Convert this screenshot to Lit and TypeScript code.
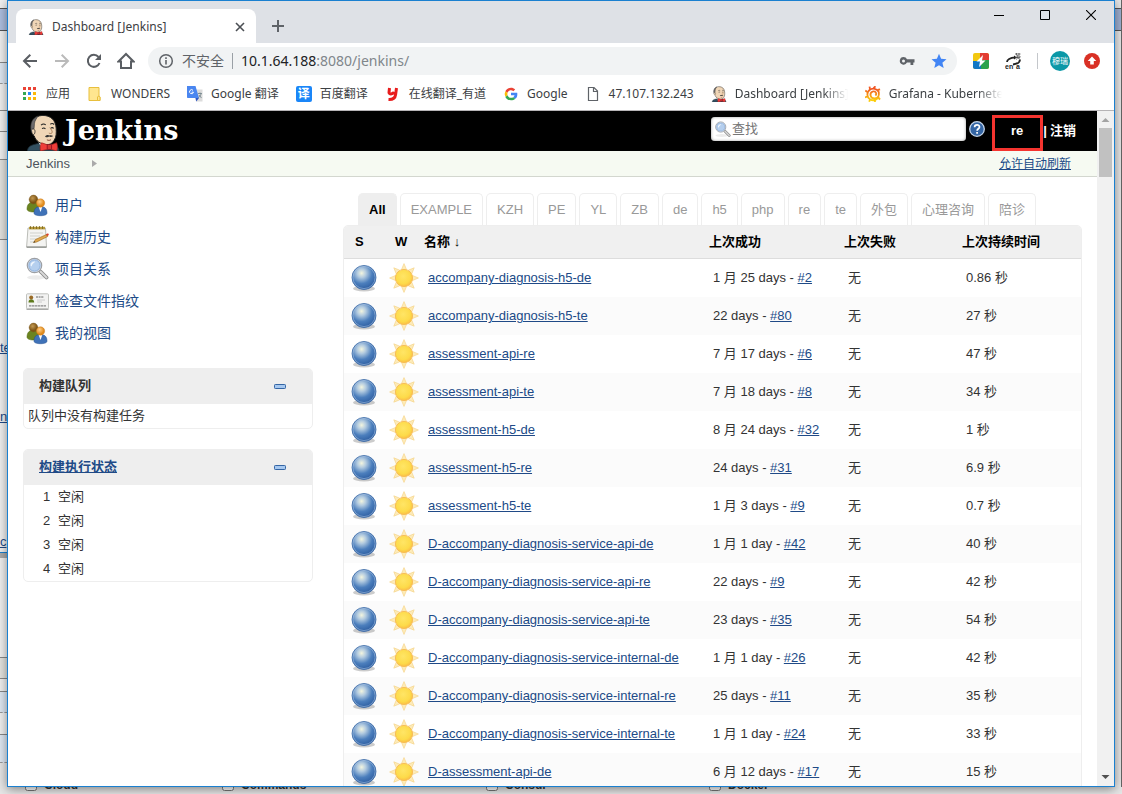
import { LitElement, html, css, svg } from "lit";
import { customElement, state } from "lit/decorators.js";
import { classMap } from "lit/directives/class-map.js";

const butler = (cls: string) => html`<svg class=${cls} viewBox="0 0 34 38" aria-hidden="true">
  <path d="M1 38c0-3 2-5.500 6-6.500l6-1.500h10l6 2c3 1 4.500 3 4.500 6z" fill="#335061" stroke="#1b2a33" stroke-width=".8"/>
  <path d="M12 28l3 6 5 1 4-4-1-4z" fill="#fff"/>
  <path d="M5.500 16C4 8 8 2 16 1.500c9-.4 14 5 14.500 13 .3 5 .3 9-2 12.500-2 3.500-5 5-8.500 4.500-6-.8-10.500-4-12-9-1.800-.8-2.800-4-2.500-6.500z" fill="#f0d6b7" stroke="#222" stroke-width="1"/>
  <path d="M5.200 19C3 10 6 4 12 2c-2 3-3.500 5-3.800 8-.2 2 0 3-.4 5z" fill="#6d6b6d" stroke="#333" stroke-width=".6"/>
  <path d="M5.500 16c1.500-1.500 3.500-.2 3.300 2.200-.1 1.800-.8 3.200-2 3" fill="#f0d6b7" stroke="#222" stroke-width=".8"/>
  <path d="M15 11.500c1.500-1.400 3.500-1.400 4.800-.4M24.500 10.500c1.200-.9 2.800-.8 4 .3M16 15c1.200-.8 2.500-.8 3.500.2M25 14.500c1-.7 2-.6 3 .2" fill="none" stroke="#222" stroke-width="1.100"/>
  <path d="M24 14c1.500 2 3 4 2.300 5.300-.6 1-2.300.8-3.300.3" fill="none" stroke="#a67b55" stroke-width="1"/>
  <path d="M19 23c2-1.600 3.500-1.700 4.500-.8 1.300-.8 2.600-.5 4 .5-1.600 1.100-3 1.200-4.200.5-1.200.9-2.800.9-4.300-.2z" fill="#333"/>
  <path d="M21 26.500c1.500.8 3 .7 4.200-.1" fill="none" stroke="#8a4b3a" stroke-width="1"/>
  <path d="M15.500 29.500l6.500 2.300v4.400l-7.500 1.800c-.8-2.500-.6-6 1-8.500zM31 29.500l-6 2.300v4.400l6 1.800c1.200-2.500 1-6 0-8.500z" fill="#ef3d3a" stroke="#a3201c" stroke-width=".7"/>
  <rect x="21.300" y="31.300" width="4.500" height="5.200" rx="1.200" fill="#d33833" stroke="#81001e" stroke-width=".7"/>
</svg>`;

const people = html`<svg class="i24" viewBox="0 0 24 24" aria-hidden="true">
  <defs>
    <radialGradient id="hairA" cx=".4" cy=".35"><stop offset="0" stop-color="#c49a52"/><stop offset="1" stop-color="#7d5415"/></radialGradient>
    <radialGradient id="hairB" cx=".4" cy=".35"><stop offset="0" stop-color="#ffd18a"/><stop offset="1" stop-color="#e08a1c"/></radialGradient>
  </defs>
  <path d="M2 16c0-4.500 2.500-7 6.500-7s6 2.500 6 7c0 2-3 3-6.300 3S2 18 2 16z" fill="#6b8420" stroke="#4f660f" stroke-width=".5"/>
  <circle cx="8.500" cy="6.500" r="4.400" fill="url(#hairA)" stroke="#7a5518" stroke-width=".4"/>
  <path d="M9 20c0-4.500 2.500-6.500 6.500-6.500S22 15.500 22 20c0 2-3 2.700-6.500 2.700S9 22 9 20z" fill="#3f72b8" stroke="#24508f" stroke-width=".5"/>
  <path d="M13.700 14l1.800 5 1.800-5z" fill="#fff"/>
  <circle cx="15.500" cy="10" r="4.200" fill="url(#hairB)" stroke="#c47410" stroke-width=".4"/>
</svg>`;

const notepad = html`<svg class="i24" viewBox="0 0 24 24" aria-hidden="true">
  <path d="M3 3h17.500l1 19H1.600z" fill="#f4f4f2" stroke="#b3b5b0" stroke-width=".9"/>
  <path d="M1.600 21.500h20v1.300h-20z" fill="#8d8f8a"/>
  <path d="M4 1.800h16v2.600H4z" fill="#b79a3b"/>
  <path d="M5.500 1v3M8.500 1v3M11.500 1v3M14.500 1v3M17.500 1v3" stroke="#6f5c18" stroke-width=".7"/>
  <path d="M5 8h13M5 11h10M5 14h7M5 17h4" stroke="#cfd1cc" stroke-width="1"/>
  <path d="M8.500 17.500l2-3 11-5 1.200 2-11 5.500z" fill="#e0a850" stroke="#9a6512" stroke-width=".6"/>
  <path d="M21 9.300l1.400-.7c1-.3 1.800 1 1.100 1.700l-1.400.9z" fill="#d9402c"/>
  <path d="M8.500 17.500l1-1.500.8 1.200z" fill="#333"/>
</svg>`;

const lens = (cls: string) => html`<svg class=${cls} viewBox="0 0 24 24" aria-hidden="true">
  <ellipse cx="11" cy="20.500" rx="9" ry="2.200" fill="#ececec"/>
  <path d="M15.500 14.500l6 6" stroke="#8a8a8a" stroke-width="3.800" stroke-linecap="round"/>
  <path d="M15.500 14.500l6 6" stroke="#d8d8d8" stroke-width="2" stroke-linecap="round"/>
  <circle cx="9.500" cy="8.500" r="7.200" fill="#e4ecf5" stroke="#9c9fa4" stroke-width="1.200"/>
  <circle cx="9.500" cy="8.500" r="5.700" fill="#b5cfee" stroke="#7ea3d4" stroke-width=".8"/>
  <path d="M5.500 8.500c0-2.600 2-4.200 4.500-4 .8.600-2.700 1.600-3.300 5z" fill="#eef5fd"/>
</svg>`;

const card = html`<svg class="i24" viewBox="0 0 24 24" aria-hidden="true">
  <rect x="1.500" y="4.800" width="22" height="15" rx="1" fill="#f3f3f2" stroke="#c0c2be"/>
  <path d="M1.500 20.300h22" stroke="#999" stroke-width="1"/>
  <path d="M3.500 13.500c0-2.400 1.200-3.200 2.700-3.200s3 .8 3 3.200z" fill="#5d7a1c"/>
  <circle cx="6.200" cy="8.600" r="2" fill="#9a6a25"/>
  <path d="M11 8h8" stroke="#666" stroke-width="1" stroke-dasharray="2 .6"/>
  <path d="M12 11h8M12 13h5" stroke="#ccc"/>
  <path d="M4 16.800h17" stroke="#888" stroke-width="1.200" stroke-dasharray="2.500 .5"/>
</svg>`;

const ball = html`<svg class="i32" viewBox="0 0 32 32" role="img" aria-label="Success">
  <defs>
    <radialGradient id="orb" cx=".4" cy=".32" r=".72">
      <stop offset="0" stop-color="#f3f5df"/><stop offset=".25" stop-color="#b3cbe0"/>
      <stop offset=".6" stop-color="#4c7fbd"/><stop offset="1" stop-color="#2a5a9e"/>
    </radialGradient>
  </defs>
  <ellipse cx="16" cy="26.500" rx="11" ry="3" fill="#000" opacity=".2"/>
  <circle cx="16" cy="15.500" r="12" fill="url(#orb)" stroke="#3a68a4" stroke-width=".8"/>
  <circle cx="16" cy="15.500" r="11.100" fill="none" stroke="#a9c4e4" stroke-opacity=".6" stroke-width=".9"/>
</svg>`;

const rays = [0, 45, 90, 135, 180, 225, 270, 315];
const sun = html`<svg class="i32" viewBox="0 0 32 32" role="img" aria-label="100%">
  <defs>
    <radialGradient id="sol" cx=".45" cy=".4" r=".6">
      <stop offset="0" stop-color="#ffe566"/><stop offset=".7" stop-color="#fddb4a"/><stop offset="1" stop-color="#fbbf45"/>
    </radialGradient>
  </defs>
  ${rays.map((r) => svg`<path d="M13.500 7.500L16 1.600l2.500 5.900z" transform="rotate(${r} 16 16)" fill="#fdebb8" stroke="#f6d58c" stroke-width=".7"/>`)}
  <circle cx="16" cy="16" r="8.600" fill="url(#sol)" stroke="#f7bb55" stroke-width=".9"/>
</svg>`;

const bookmarkIcons: Record<string, unknown> = {
  apps: html`<svg class="i16" viewBox="0 0 16 16" aria-hidden="true"><path d="M1 1h3v3H1zM6 1h3v3H6zM11 1h3v3h-3z" fill="#ea4335"/><path d="M1 6h3v3H1zM1 11h3v3H1z" fill="#34a853"/><path d="M6 6h3v3H6z" fill="#2a8af6"/><path d="M11 6h3v3h-3zM6 11h3v3H6zM11 11h3v3h-3z" fill="#fbb90a"/></svg>`,
  folder: html`<svg class="i16" viewBox="0 0 16 16" aria-hidden="true"><path d="M2 1.500h10v9.500h1v3.500H2z" fill="#ffe68f" stroke="#e8bf3c"/><path d="M10.500 14.500V11c0-1 2.500-1 2.500 0v3.500z" fill="#ffe68f" stroke="#e8bf3c"/></svg>`,
  translate: html`<svg class="i16" viewBox="0 0 16 16" aria-hidden="true"><path d="M6 3.500h9.500V15.500H9z" fill="#dcdcdc"/><path d="M0 0h8.500l3.500 12H1C.3 12 0 11.600 0 11z" fill="#4a86f0"/><path d="M8.500 12H12l-2.700 3.600z" fill="#2f56c4"/><path d="M6 4.300a2 2 0 1 0 .5 1.900H4.600" fill="none" stroke="#fff" stroke-width="1"/><path d="M11 7.500h4M13 6.500v1M14 8c-.5 2-1.500 3-2.500 3.700M12 9l2.500 3" fill="none" stroke="#6b7d85" stroke-width=".8"/></svg>`,
  baidu: html`<span class="baidu" aria-hidden="true">译</span>`,
  youdao: html`<svg class="i16" viewBox="0 0 16 16" aria-hidden="true"><path d="M4.500 2l-.5 4.500c0 1.900 3.500 1.900 5.200-.3M11.500 2l-.9 6.500c-.4 3.400-2.600 5.200-7.100 5" fill="none" stroke="#e81c1c" stroke-width="3"/></svg>`,
  google: html`<svg class="i16" viewBox="0 0 48 48" aria-hidden="true"><path fill="#EA4335" d="M24 13c3 0 5.200 1.200 6.800 2.700l5.700-5.500C33 7 28.800 5 24 5 16.600 5 10.200 9.200 7 15.400l6.600 5.100C15.200 16 19.200 13 24 13z"/><path fill="#4285F4" d="M43 24.400c0-1.500-.1-2.600-.4-3.900H24v7.200h10.700c-.5 2.500-2 4.400-4 5.700l6.400 5C41 35 43 30.300 43 24.400z"/><path fill="#FBBC05" d="M13.600 27.600a11.500 11.500 0 0 1 0-7.100L7 15.400a19 19 0 0 0 0 17.200z"/><path fill="#34A853" d="M24 43c5.100 0 9.500-1.700 12.900-4.700l-6.300-4.900C29 34.500 26.800 35.200 24 35.200c-4.800 0-8.900-3.200-10.400-7.600L7 32.700C10.200 38.800 16.600 43 24 43z"/></svg>`,
  page: html`<svg class="i16" viewBox="0 0 16 16" aria-hidden="true"><path d="M3.500 1.500h5.500l3.500 3.500v9.500h-9zM8.500 1.500V5.500h4" fill="#fff" stroke="#5f6368" stroke-width="1.200"/></svg>`,
  jenkins: butler("i16"),
  grafana: html`<svg class="i16" viewBox="0 0 16 16" aria-hidden="true"><defs><linearGradient id="graf" x1="0" y1="0" x2="0" y2="1"><stop offset="0" stop-color="#f04e23"/><stop offset="1" stop-color="#fcd20a"/></linearGradient></defs><path d="M14 10.500A6 5.800 0 1 1 13.800 6M13.800 6c.6 4-1 6.500-4.500 6.500-4 0-5.500-5.500-1.500-7 3-.8 4.500 2.500 2.500 4" fill="none" stroke="url(#graf)" stroke-width="1.800"/><path d="M5 3L4.500.6M8.500 2.200L10.500.3M12.500 4l2.600-.6M2.500 6L.3 4.600M2.300 10.500L0 11.500M5 13.500l-.8 2.200M9.500 14l.7 2M13.500 12l1.600 1.500" stroke="url(#graf)" stroke-width="1.800"/></svg>`,
};

const bookmarks = [
  { icon: "apps", label: "应用" },
  { icon: "folder", label: "WONDERS" },
  { icon: "translate", label: "Google 翻译" },
  { icon: "baidu", label: "百度翻译" },
  { icon: "youdao", label: "在线翻译_有道" },
  { icon: "google", label: "Google" },
  { icon: "page", label: "47.107.132.243" },
  { icon: "jenkins", label: "Dashboard [Jenkins]", faded: true },
  { icon: "grafana", label: "Grafana - Kubernetes", faded: true },
];

const tasks = [
  { icon: people, label: "用户" },
  { icon: notepad, label: "构建历史" },
  { icon: lens("i24"), label: "项目关系" },
  { icon: card, label: "检查文件指纹" },
  { icon: people, label: "我的视图" },
];

const views = ["All", "EXAMPLE", "KZH", "PE", "YL", "ZB", "de", "h5", "php", "re", "te", "外包", "心理咨询", "陪诊"];

const jobs = [
  ["accompany-diagnosis-h5-de", "1 月 25 days", "#2", "0.86 秒"],
  ["accompany-diagnosis-h5-te", "22 days", "#80", "27 秒"],
  ["assessment-api-re", "7 月 17 days", "#6", "47 秒"],
  ["assessment-api-te", "7 月 18 days", "#8", "34 秒"],
  ["assessment-h5-de", "8 月 24 days", "#32", "1 秒"],
  ["assessment-h5-re", "24 days", "#31", "6.9 秒"],
  ["assessment-h5-te", "1 月 3 days", "#9", "0.7 秒"],
  ["D-accompany-diagnosis-service-api-de", "1 月 1 day", "#42", "40 秒"],
  ["D-accompany-diagnosis-service-api-re", "22 days", "#9", "42 秒"],
  ["D-accompany-diagnosis-service-api-te", "23 days", "#35", "54 秒"],
  ["D-accompany-diagnosis-service-internal-de", "1 月 1 day", "#26", "42 秒"],
  ["D-accompany-diagnosis-service-internal-re", "25 days", "#11", "35 秒"],
  ["D-accompany-diagnosis-service-internal-te", "1 月 1 day", "#24", "33 秒"],
  ["D-assessment-api-de", "6 月 12 days", "#17", "15 秒"],
];

/* Slices of the window behind, top to bottom: height, look, visible letters. */
const slices: [number, string, string?][] = [
  [8, "plain"], [23, "title"], [32, "plain solid"], [21, "blue dashed"], [27, "plain solid"],
  [21, "plain solid"], [28, "plain solid"], [80, "stone solid"], [98, "plain"], [20, "plain", "te"],
  [49, "plain"], [20, "plain", "nc"], [105, "plain"], [18, "plain", "c"], [3, "edge"],
  [5, "shade"], [100, "plain solid"], [21, "stone solid"], [13, "plain solid"], [21, "blue dashed"],
  [22, "plain solid"], [28, "blue dashed"],
];

@customElement("app-root")
export class AppRoot extends LitElement {
  @state() private view = "All";

  static styles = css`
    :host {
      display: grid;
      grid-template-columns: 7px minmax(0, 1fr) 7px;
      grid-template-rows: minmax(0, 1fr) 7px;
      height: 100vh;
      overflow: hidden;
      background: #e6e6e6;
      color: #333;
      font: 13px/20px "Liberation Sans", Arial, "Noto Sans CJK SC", sans-serif;
    }
    * { box-sizing: border-box; }
    button { padding: 0; border: 0; background: none; font: inherit; color: inherit; }
    svg { display: block; flex: none; }
    a { color: #204a87; }
    .i16 { width: 16px; height: 16px; }
    .i24 { width: 24px; height: 24px; }
    .i32 { width: 32px; height: 32px; }

    .behind-left { overflow: hidden; }
    .slice { overflow: hidden; color: #204a87; text-decoration: underline; }
    .plain { background: #f1f1f1; }
    .title { background: #aebfe0; border: solid #555; border-width: 1px 0; }
    .blue { background: #dfe8f3; }
    .stone { background: #e4e4e0; }
    .solid { border-bottom: 1px solid #888; }
    .dashed { border-bottom: 1px dashed #999; }
    .edge { background: #eee; border-bottom: 1px solid #1a80d0; }
    .shade { background: #aaa; }
    .behind-right { background: #e8e8e8; border-right: 1px solid #666; padding-top: 8px; }
    .behind-title { height: 23px; background: #9fb0d2; border: solid #555; border-width: 1px 0; }
    .behind-bottom {
      grid-column: 1 / -1;
      display: grid;
      grid-template-columns: 197fr 264fr 223fr 413fr;
      grid-template-rows: minmax(0, 1fr);
      align-items: end;
      padding: 0 0 3px 25px;
      overflow: hidden;
      font: bold 12px/12px "Liberation Sans", Arial, sans-serif;
    }
    .behind-bottom label { display: flex; align-items: flex-end; gap: 7px; height: 12px; }
    .behind-bottom input { width: 12px; height: 12px; margin: 0; }

    .window {
      position: relative;
      display: flex;
      flex-direction: column;
      border: 1px solid #1a80d0;
      background: #fff;
      box-shadow: 0 2px 10px rgba(0, 0, 0, 0.45);
      min-height: 0;
    }

    .tabstrip { display: flex; align-items: flex-end; height: 42px; flex: none; background: #dee1e6; padding-left: 8px; }
    .tab {
      display: flex; align-items: center; gap: 8px;
      width: 240px; height: 34px; padding: 1px 11px 0 12px;
      background: #fff; border-radius: 8px 8px 0 0; color: #3c4043;
      font: 12px/18px "Noto Sans", "Noto Sans CJK SC", sans-serif;
    }
    .tab-title { flex: 1; }
    .newtab { width: 44px; height: 34px; display: grid; place-items: center; }
    .sysbuttons { margin-left: auto; align-self: flex-start; display: flex; }
    .sysbuttons button { width: 46px; height: 28px; display: grid; place-items: center; }

    .toolbar { display: flex; align-items: center; height: 36px; flex: none; padding: 0 6px; }
    .nav { width: 32px; height: 32px; display: grid; place-items: center; }
    .omnibox {
      flex: 1; display: flex; align-items: center; height: 28px; margin-left: 6px; padding: 0 10px;
      border-radius: 14px; background: #f1f3f4; color: #5f6368;
      font: 14px/20px "Noto Sans", "Noto Sans CJK SC", sans-serif;
    }
    .secure { margin-left: 8px; padding-right: 8px; }
    .rule { width: 1px; height: 16px; background: #9aa0a6; }
    .url { margin-left: 8px; flex: 1; color: #80868b; }
    .url b { font-weight: normal; color: #202124; }
    .pair { display: flex; gap: 16px; }
    .extensions { display: flex; align-items: center; gap: 16px; padding: 0 8px 0 16px; }
    .extensions .rule { background: #c4c7cb; }
    .avatar {
      width: 20px; height: 20px; margin: 0 -2px 0 -4px; border-radius: 50%; background: #0b98a7; color: #fff;
      font: 8px/20px "Noto Sans CJK SC", sans-serif; text-align: center; white-space: nowrap;
    }

    .bookmarks {
      display: flex; align-items: center; gap: 17px; height: 31px; flex: none; padding: 0 14px 1px;
      font: 12px/18px "Noto Sans", "Noto Sans CJK SC", sans-serif;
    }
    .bookmark { display: flex; align-items: center; gap: 8px; color: #3c4043; text-decoration: none; white-space: nowrap; }
    .faded { width: 113px; overflow: hidden; mask-image: linear-gradient(to right, #000 78%, transparent); }
    .baidu { width: 16px; height: 16px; border-radius: 2px; background: #1a86f8; color: #fff; line-height: 15px; text-align: center; font-weight: bold; }

    .viewport { display: flex; flex: 1; min-height: 0; border-top: 1px solid #b6b4b6; }
    .page { flex: 1; min-width: 0; overflow: hidden; }
    .scroll { width: 17px; flex: none; display: flex; flex-direction: column; align-items: center; background: #f1f1f1; }
    .scroll svg { width: 17px; height: 17px; }
    .thumb { width: 13px; height: 49px; background: #c1c1c1; margin-bottom: auto; }

    .masthead { display: flex; align-items: center; height: 40px; padding: 0 21px 4px 18px; background: #000; color: #fff; }
    .logo { display: flex; align-items: flex-end; height: 36px; color: #fff; text-decoration: none; font: bold 27px/36px "DejaVu Serif", Georgia, serif; gap: 5px; }
    .mascot { width: 34px; height: 37px; margin-bottom: -4px; }
    .wordmark { margin-bottom: -2px; }
    .search { display: flex; align-items: center; width: 255px; height: 24px; margin-left: auto; padding-left: 3px; border-radius: 4px; background: #fff; box-shadow: inset 0 0 3px #999; }
    .search input { flex: 1; min-width: 0; margin-left: 1px; padding: 0; border: 0; outline: 0; background: none; font: inherit; }
    .search input::placeholder { color: #757575; }
    .i18 { width: 17px; height: 17px; }
    .help { margin-left: 3px; width: 16px; height: 16px; }
    .account { display: flex; margin-left: 26px; padding-top: 4px; font-weight: bold; line-height: 24px; }
    .account a { color: #fff; text-decoration: none; }
    .account .user { position: relative; margin-right: 20px; }
    .user::after { content: ""; position: absolute; inset: -4px -20px -8px -19px; border: 3px solid #f5342f; }
    .account .logout { margin-left: 3px; }

    .crumbs { display: flex; align-items: center; height: 26px; padding: 0 26px 0 18px; background: #f6faf2; border-bottom: 1px solid #d3d7cf; }
    .crumbs .home { color: #4d545d; text-decoration: none; }
    .crumbs svg { margin-left: 22px; width: 5px; height: 7px; }
    .refresh { margin-left: auto; font-size: 12px; }

    .body { display: flex; }
    .side { width: 335px; flex: none; padding: 12px 30px 0 15px; }
    .task { display: flex; align-items: center; gap: 6px; height: 32px; padding-left: 2px; font-size: 14px; text-decoration: none; }
    .panels { display: flex; flex-direction: column; gap: 20px; margin-top: 19px; }
    .panel { border: 1px solid #eee; border-radius: 5px; overflow: hidden; }
    .panel-head { display: flex; align-items: center; justify-content: space-between; height: 35px; padding: 0 26px 1px 15px; background: #eee; }
    .panel-head h2 { margin: 0; font-size: 13px; line-height: 20px; }
    .panel p { margin: 0; padding-left: 4px; line-height: 24px; }
    .panel ol { margin: 0; padding: 0 0 0 19px; list-style: none; line-height: 24px; }
    .num { display: inline-block; width: 15px; }

    .main { flex: 1; min-width: 0; padding: 16px 15px 0 0; }
    .views { display: flex; gap: 3px; padding-left: 15px; }
    .view { height: 32px; padding: 0 10px; border: 1px solid #eee; border-bottom: 0; border-radius: 5px 5px 0 0; color: #999; white-space: nowrap; }
    .view.active { background: #eee; color: #000; font-weight: bold; }
    .jobs-box { border: 1px solid #eee; border-radius: 5px 5px 0 0; overflow: hidden; }
    .jobs { width: 100%; table-layout: fixed; border-collapse: separate; border-spacing: 0; }
    .jobs th { height: 33px; padding: 0 0 1px; background: #f0f0f0; border-bottom: 1px solid #ddd; color: #000; text-align: left; }
    .jobs .pic { width: 40px; padding-left: 11px; }
    .success { width: 135px; }
    .failure { width: 118px; }
    .duration { width: 119px; }
    .sort { font-weight: normal; }
    .jobs td { height: 38px; padding: 0 0 0 4px; }
    .jobs tbody tr:nth-child(even) { background: #fbfbfb; }
  `;

  private minus(label: string) {
    return html`<button aria-label=${label}><svg width="12" height="5" viewBox="0 0 12 5"><rect x=".5" y=".5" width="11" height="4" rx=".8" fill="#a6c8f0" stroke="#3465a4"/></svg></button>`;
  }

  private chrome() {
    return html`
      <div class="tabstrip">
        <div class="tab">
          ${butler("i16")}<span class="tab-title">Dashboard [Jenkins]</span>
          <button aria-label="关闭标签页"><svg width="10" height="10" viewBox="0 0 10 10"><path d="M1 1l8 8M9 1L1 9" stroke="#4b4f54" stroke-width="1.600"/></svg></button>
        </div>
        <button class="newtab" aria-label="新标签页"><svg width="12" height="12" viewBox="0 0 12 12"><path d="M6 0v12M0 6h12" stroke="#5f6368" stroke-width="2"/></svg></button>
        <div class="sysbuttons">
          <button aria-label="最小化"><svg width="10" height="10" viewBox="0 0 10 10"><path d="M0 5.500h10" stroke="#000"/></svg></button>
          <button aria-label="最大化"><svg width="10" height="10" viewBox="0 0 10 10"><path d="M.5.5h9v9h-9z" fill="none" stroke="#000"/></svg></button>
          <button aria-label="关闭"><svg width="10" height="10" viewBox="0 0 10 10"><path d="M0 0l10 10M10 0L0 10" stroke="#000" stroke-width="1.100"/></svg></button>
        </div>
      </div>
      <div class="toolbar">
        <button class="nav" aria-label="后退"><svg width="16" height="16" viewBox="0 0 16 16" fill="none" stroke="#5a5e63" stroke-width="2"><path d="M15 8H2.500M8.300 1.700L2 8l6.300 6.300"/></svg></button>
        <button class="nav" aria-label="前进"><svg width="16" height="16" viewBox="0 0 16 16" fill="none" stroke="#bababa" stroke-width="2"><path d="M1 8h12.500M7.700 1.700L14 8l-6.300 6.300"/></svg></button>
        <button class="nav" aria-label="刷新"><svg width="16" height="16" viewBox="0 0 16 16"><path d="M13.500 10A6 6 0 1 1 12.500 4" fill="none" stroke="#5a5e63" stroke-width="2"/><path d="M15 1v6H9z" fill="#5a5e63"/></svg></button>
        <button class="nav" aria-label="主页"><svg width="18" height="18" viewBox="0 0 18 18"><path d="M1.500 9.500L9 2l7.500 7.500H14V16H4V9.500z" fill="none" stroke="#5a5e63" stroke-width="2"/></svg></button>
        <div class="omnibox">
          <svg class="i16" viewBox="0 0 16 16"><circle cx="8" cy="8" r="6.300" fill="none" stroke="#5f6368" stroke-width="1.500"/><path d="M8 7v4.500M8 4.300V6" stroke="#5f6368" stroke-width="1.600"/></svg>
          <span class="secure">不安全</span><span class="rule"></span>
          <span class="url"><b>10.1.64.188</b>:8080/jenkins/</span>
          <div class="pair">
            <svg class="i16" viewBox="0 0 16 16"><path d="M4.500 4a3.800 3.800 0 0 1 3.500 2.300h7.500v3.200h-1.200V12h-2.800V9.500H8A3.800 3.800 0 1 1 4.500 4z" fill="#5f6368"/><circle cx="4.500" cy="7.900" r="1.500" fill="#f1f3f4"/></svg>
            <svg class="i16" viewBox="0 0 16 16"><path d="M8 .8l2.100 5 5.400.4-4.100 3.500 1.300 5.300L8 12.200 3.300 15l1.300-5.300L.5 6.200l5.400-.4z" fill="#4285f4"/></svg>
          </div>
        </div>
        <div class="extensions">
          <svg class="i16" viewBox="0 0 16 16"><rect width="16" height="16" rx="2" fill="#f2c811"/><path d="M7 0h7c1 0 2 1 2 2v5H7z" fill="#e23c32"/><path d="M0 8h8v8H2c-1 0-2-1-2-2z" fill="#1277c4"/><path d="M8 7h8v7c0 1-1 2-2 2H8z" fill="#2ba24c"/><path d="M10 2L3.500 8.500h3.500L6 14l6.500-6.500H9z" fill="#fff"/></svg>
          <svg class="i16" viewBox="0 0 16 16"><path d="M2 9c0-2 3-4.500 8-4.500M15 6.500c0 3-3 4.500-7 5" fill="none" stroke="#222" stroke-width="1.800"/><path d="M9 2.500l3 2-3 2z" fill="#222"/><path d="M10 1h5.500M11.500 0v2M14 0v2M11 3h4v1.500h-5M12.800 2v3M11 6.500l1.800-1.500 2.200 1.200" fill="none" stroke="#444" stroke-width=".7"/><text x="0" y="15.500" font-size="7" font-weight="bold" fill="#222">en</text><text x="11" y="15.500" font-size="7" font-weight="bold" fill="#222">a</text></svg>
          <span class="rule"></span>
          <button class="avatar" aria-label="用户">穆瑞</button>
          <svg class="i16" viewBox="0 0 16 16"><circle cx="8" cy="8" r="8" fill="#d93025"/><path d="M8 3.500l4.300 4.500H9.800v3.500H6.200V8H3.700z" fill="#fff"/></svg>
        </div>
      </div>
      <nav class="bookmarks">
        ${bookmarks.map((b) => html`<a class="bookmark" href="#">${bookmarkIcons[b.icon]}<span class=${classMap({ faded: !!b.faded })}>${b.label}</span></a>`)}
      </nav>`;
  }

  render() {
    return html`
      <div class="behind-left" aria-hidden="true">
        ${slices.map(([h, look, text]) => html`<div class="slice ${look}" style="height:${h}px">${text ?? ""}</div>`)}
      </div>
      <div class="window">
        ${this.chrome()}
        <div class="viewport">
          <div class="page">
            <header class="masthead">
              <a class="logo" href="#">${butler("mascot")}<span class="wordmark">Jenkins</span></a>
              <label class="search">${lens("i18")}<input type="text" placeholder="查找" aria-label="查找" /></label>
              <svg class="help" viewBox="0 0 16 16"><circle cx="8" cy="8" r="7.300" fill="#3465a4" stroke="#c5d5ea" stroke-width="1.300"/><path d="M5.600 6.300c0-3.300 4.900-3 4.900-.3 0 1.800-2.400 1.800-2.400 3.800M8.100 11v1.800" fill="none" stroke="#fff" stroke-width="1.700"/></svg>
              <div class="account"><a class="user" href="#">re</a><span>|</span><a class="logout" href="#">注销</a></div>
            </header>
            <div class="crumbs">
              <a class="home" href="#">Jenkins</a>
              <svg viewBox="0 0 5 7"><path d="M0 0l5 3.500L0 7z" fill="#aaa"/></svg>
              <a class="refresh" href="#">允许自动刷新</a>
            </div>
            <div class="body">
              <aside class="side">
                ${tasks.map((t) => html`<a class="task" href="#">${t.icon}<span>${t.label}</span></a>`)}
                <div class="panels">
                  <section class="panel">
                    <div class="panel-head"><h2>构建队列</h2>${this.minus("收起构建队列")}</div>
                    <p>队列中没有构建任务</p>
                  </section>
                  <section class="panel">
                    <div class="panel-head"><h2><a href="#">构建执行状态</a></h2>${this.minus("收起构建执行状态")}</div>
                    <ol>${[1, 2, 3, 4].map((n) => html`<li><span class="num">${n}</span>空闲</li>`)}</ol>
                  </section>
                </div>
              </aside>
              <main class="main">
                <div class="views">
                  ${views.map((v) => html`<button class=${classMap({ view: true, active: v === this.view })} @click=${() => (this.view = v)}>${v}</button>`)}
                </div>
                <div class="jobs-box">
                  <table class="jobs">
                    <thead><tr>
                      <th class="pic">S</th><th class="pic">W</th><th>名称 <span class="sort">↓</span></th>
                      <th class="success">上次成功</th><th class="failure">上次失败</th><th class="duration">上次持续时间</th>
                    </tr></thead>
                    <tbody>
                      ${jobs.map(([name, ago, build, took]) => html`<tr>
                        <td>${ball}</td><td>${sun}</td><td><a href="#">${name}</a></td>
                        <td>${ago} - <a href="#">${build}</a></td><td>无</td><td>${took}</td>
                      </tr>`)}
                    </tbody>
                  </table>
                </div>
              </main>
            </div>
          </div>
          <div class="scroll" aria-hidden="true">
            <svg viewBox="0 0 17 17"><path d="M4.500 11l4-4 4 4z" fill="#a3a3a3"/></svg>
            <div class="thumb"></div>
            <svg viewBox="0 0 17 17"><path d="M4.500 6l4 4 4-4z" fill="#505050"/></svg>
          </div>
        </div>
      </div>
      <div class="behind-right" aria-hidden="true"><div class="behind-title"></div></div>
      <div class="behind-bottom">
        <label><input type="checkbox" />Cloud</label>
        <label><input type="checkbox" />Commands</label>
        <label><input type="checkbox" />Consul</label>
        <label><input type="checkbox" />Docker</label>
      </div>`;
  }
}
